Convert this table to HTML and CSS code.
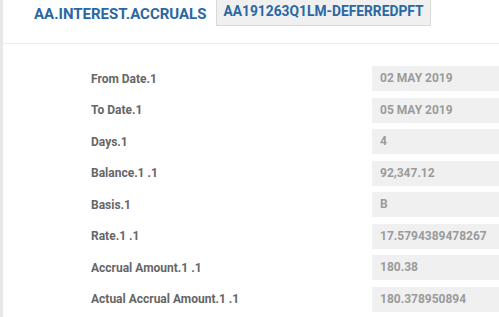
FILE: index.html
```html
<!DOCTYPE html>
<html>
<head>
<meta charset="utf-8">
<link rel="stylesheet" href="styles.css">
</head>
<body>
<div class="page">
  <div class="header">
    <span class="title">AA.INTEREST.ACCRUALS</span>
    <span class="id-box">AA191263Q1LM-DEFERREDPFT</span>
  </div>
  <div class="rows">
    <div class="row"><span class="label">From Date.1</span><span class="value">02 MAY 2019</span></div>
    <div class="row"><span class="label">To Date.1</span><span class="value">05 MAY 2019</span></div>
    <div class="row"><span class="label">Days.1</span><span class="value">4</span></div>
    <div class="row"><span class="label">Balance.1 .1</span><span class="value">92,347.12</span></div>
    <div class="row"><span class="label">Basis.1</span><span class="value">B</span></div>
    <div class="row"><span class="label">Rate.1 .1</span><span class="value">17.5794389478267</span></div>
    <div class="row"><span class="label">Accrual Amount.1 .1</span><span class="value">180.38</span></div>
    <div class="row"><span class="label">Actual Accrual Amount.1 .1</span><span class="value">180.378950894</span></div>
  </div>
</div>
</body>
</html>
```
FILE: styles.css
```css
html, body {
  margin: 0;
  padding: 0;
  background: #fff;
  overflow: hidden;
}
body {
  font-family: Roboto, "Liberation Sans", sans-serif;
  font-weight: bold;
}
.page {
  border-left: 3px solid #e8e8e8;
  height: 317px;
  box-sizing: border-box;
}
.header {
  display: flex;
  align-items: flex-start;
  height: 44px;
  border-bottom: 1px solid #ececec;
  box-sizing: border-box;
  padding-left: 31px;
}
.title {
  color: #2b67a3;
  font-size: 15px;
  margin-top: 5px;
  margin-right: 10px;
}
.id-box {
  color: #2b67a3;
  font-size: 13.8px;
  background: #f0f0f0;
  border: 1px solid #d9d9d9;
  border-top: none;
  padding: 3px 6px 6px 6px;
  line-height: 16px;
}
.rows {
  display: flex;
  flex-direction: column;
  padding-top: 22px;
  gap: 6.5px;
}
.row {
  display: flex;
  align-items: center;
  height: 25px;
}
.label {
  width: 281px;
  padding-left: 88px;
  color: #666;
  font-size: 12px;
}
.value {
  flex: 1;
  height: 25px;
  line-height: 25px;
  background: #f0f0f0;
  color: #9b9b9b;
  font-size: 12px;
  padding-left: 8px;
}
```
